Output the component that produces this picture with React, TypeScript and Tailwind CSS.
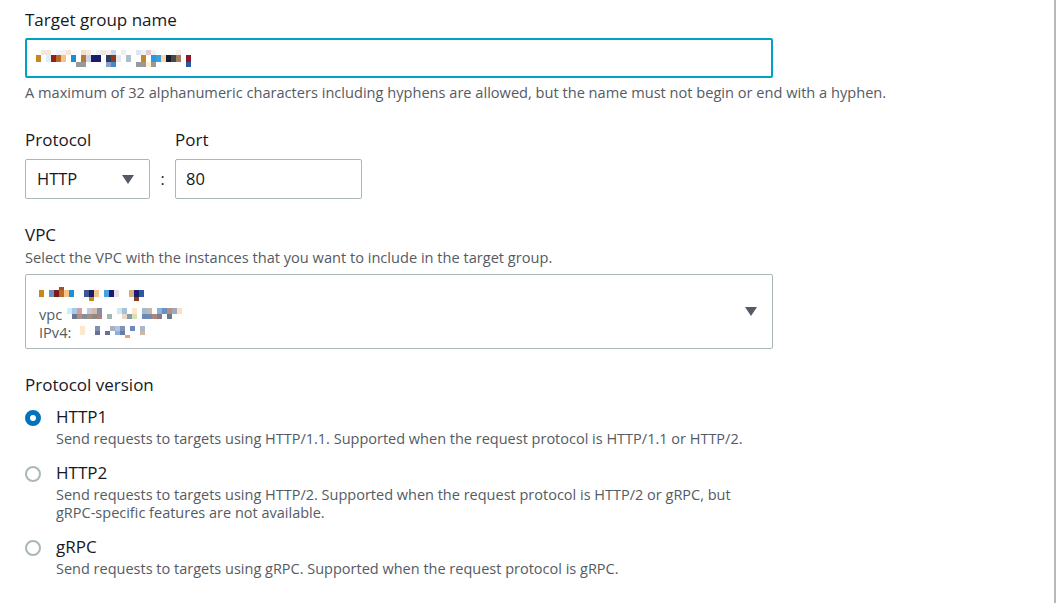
import React from 'react';

const font = { fontFamily: '"Open Sans", "Noto Sans", Arial, sans-serif' };

// pixelated (redacted) text, drawn as a grid of colour cells
function Blur({ rows, heights, cell = 5 }: { rows: string[][]; heights: number[]; cell?: number }) {
  return (
    <div className="flex flex-col">
      {rows.map((row, i) => (
        <div key={i} className="flex">
          {row.map((c, j) => (
            <span
              key={j}
              style={{ width: cell, height: heights[i], background: c === '.' ? 'transparent' : c }}
            />
          ))}
        </div>
      ))}
    </div>
  );
}

const nameRows = [
  '. #f6e6e0 #f6e6e0 . #eef6fa #f8f0ea #f6e4d8 . . #f0e0c8 #f8e8e0 . #eef0f8 #f0e6e0 #f6eee8 #c8d8e8 . #eeeeee . . #dde8f0 #eef0f6 #e0c8d0 #f0f0f8 . . . . #f6eeee . .'.split(' '),
  '#c8861e . #d6f3f8 #9b1c1c #b86a2a #f4c38e . #1a8fd6 . #b8782e #c8d4e8 #1a1a6e #1a1a6e . #2c3e5c #8a3a1a #e0e8f0 . #a8c0c8 . . #c8861e . #2a9ad8 #3aa0e0 #fcd8a8 #1a1a2e #444850 #a08060 . #8a1a2a'.split(' '),
  '. . . . . . . . #999 #999 . . . . #8aa0c8 #4488cc . . . . #999 #999 #fff0d0 #999 . . . . . . #2a5aa0'.split(' '),
];

const vpcName = [
  '. . . . #a0522d . . . . . . . . . . . . . . . . . . .'.split(' '),
  '#c8861e . #6a90c0 #7a1a1a #b86a2a #f4c38e #1a8fd6 . . #3a5a8a #1a1a6e #f4c38e . #4aa0e0 #1a1a6e #e8e0e8 . . #d8b080 #1a1a6e #2a5aa0 . . .'.split(' '),
  '. . . . . . . . . . #c8861e . . . . . . . . #8a3a1a . . . .'.split(' '),
];

const vpcId = [
  '. #c8f0f8 #a8c8e8 #d0a0a0 . #c0c8e0 #d8b8a8 #8090b0 . . . #d0e8f0 #a8c0d8 . #fce8c8 . #a8b8d0 #c8b8a8 . #8ab0e0 #6890c0 #b89080 #a0a8c0 #fce0c0'.split(' '),
  '. . #6a7890 #b09080 #8a8a9a #a09080 #908888 #b08080 . #a0b8b0 . . #e8d8c8 #8a9aa8 #d8e0b8 . #6a8ab0 #7088c0 #a88878 #8a7a8a . #6a7a8a'.split(' '),
];

const ipRows = [
  '. #fce8c8 . . #8090b0 . . #a8b0c8 #a8c8e8 #8090b8 . #7088c0 . #a8b8c8'.split(' '),
  '. #f8e8d8 . . #6a7090 . #6a7090 . #8ab0e0 #6a7aa0 . . . #d0b8a0'.split(' '),
  '. . . . . . . . . . #d8a880 . . .'.split(' '),
];

function Caret() {
  return (
    <svg width="12" height="9" viewBox="0 0 12 9" aria-hidden>
      <path d="M0 0h12L6 9z" fill="#545b64" />
    </svg>
  );
}

function Radio({ checked }: { checked?: boolean }) {
  return checked ? (
    <span className="block w-4 h-4 rounded-full border-[5px] border-[#0073bb] bg-white" />
  ) : (
    <span className="block w-4 h-4 rounded-full border-2 border-[#aab7b8] bg-white" />
  );
}

const versions = [
  {
    name: 'HTTP1',
    checked: true,
    desc: ['Send requests to targets using HTTP/1.1. Supported when the request protocol is HTTP/1.1 or HTTP/2.'],
  },
  {
    name: 'HTTP2',
    desc: [
      'Send requests to targets using HTTP/2. Supported when the request protocol is HTTP/2 or gRPC, but',
      'gRPC-specific features are not available.',
    ],
  },
  {
    name: 'gRPC',
    desc: ['Send requests to targets using gRPC. Supported when the request protocol is gRPC.'],
  },
];

export default function App() {
  return (
    <div className="w-[1056px] h-[603px] bg-white flex text-[#16191f] overflow-hidden" style={font}>
      <div className="flex-1 pl-[25px] pt-[9px]">
        <div className="w-[748px]">
          <div className="text-[17px] leading-[22px]">Target group name</div>
          <div className="mt-[7px] h-10 border-2 border-[#00a1c9] rounded-[2px] flex items-center pl-[9px]">
            <Blur rows={nameRows} heights={[5, 7, 5]} />
          </div>
          <div className="mt-[5px] text-[14.6px] leading-[18px] text-[#545b64] whitespace-nowrap">
            A maximum of 32 alphanumeric characters including hyphens are allowed, but the name must not begin or end with a hyphen.
          </div>

          <div className="mt-[28px] flex items-start">
            <div className="w-[125px]">
              <div className="text-[17px] leading-[22px]">Protocol</div>
              <div className="mt-2 h-10 border border-[#aab7b8] rounded-[2px] flex items-center justify-between pl-[11px] pr-[15px]">
                <span className="text-[16.5px]">HTTP</span>
                <Caret />
              </div>
            </div>
            <div className="w-[25px] pt-[30px] h-[70px] flex items-center justify-center text-base">:</div>
            <div className="w-[187px]">
              <div className="text-[17px] leading-[22px]">Port</div>
              <div className="mt-2 h-10 border border-[#aab7b8] rounded-[2px] flex items-center pl-[10px]">
                <span className="text-[16.5px]">80</span>
              </div>
            </div>
          </div>

          <div className="mt-[25px] text-[17px] leading-[22px]">VPC</div>
          <div className="mt-[2px] text-[14.6px] leading-[18px] text-[#545b64]">
            Select the VPC with the instances that you want to include in the target group.
          </div>
          <div className="mt-[8px] h-[75px] border border-[#aab7b8] rounded-[2px] flex items-center justify-between pl-[13px] pr-[15px]">
            <div className="flex flex-col text-[14.6px] leading-[18px] text-[#545b64]">
              <div className="h-[22px] flex items-center">
                <Blur rows={vpcName} heights={[3, 7, 4]} />
              </div>
              <div className="flex items-center">
                <span>vpc</span>
                <Blur rows={vpcId} heights={[6, 5]} />
              </div>
              <div className="flex items-center">
                <span>IPv4:&nbsp;</span>
                <Blur rows={ipRows} heights={[5, 4, 3]} />
              </div>
            </div>
            <Caret />
          </div>

          <div className="mt-[25px] text-[17px] leading-[22px]">Protocol version</div>
          <div className="mt-[10px] flex flex-col gap-[14px]">
            {versions.map((v) => (
              <div key={v.name} className="flex">
                <div className="w-[31px] pt-[4px]">
                  <Radio checked={v.checked} />
                </div>
                <div>
                  <div className="text-[17px] leading-[22px]">{v.name}</div>
                  <div className="mt-[2px] text-[14.5px] leading-[18px] text-[#545b64] whitespace-nowrap">
                    {v.desc.map((line) => (
                      <div key={line}>{line}</div>
                    ))}
                  </div>
                </div>
              </div>
            ))}
          </div>
        </div>
      </div>
      <div className="w-[2px] bg-[#b5b9bb]" />
    </div>
  );
}
